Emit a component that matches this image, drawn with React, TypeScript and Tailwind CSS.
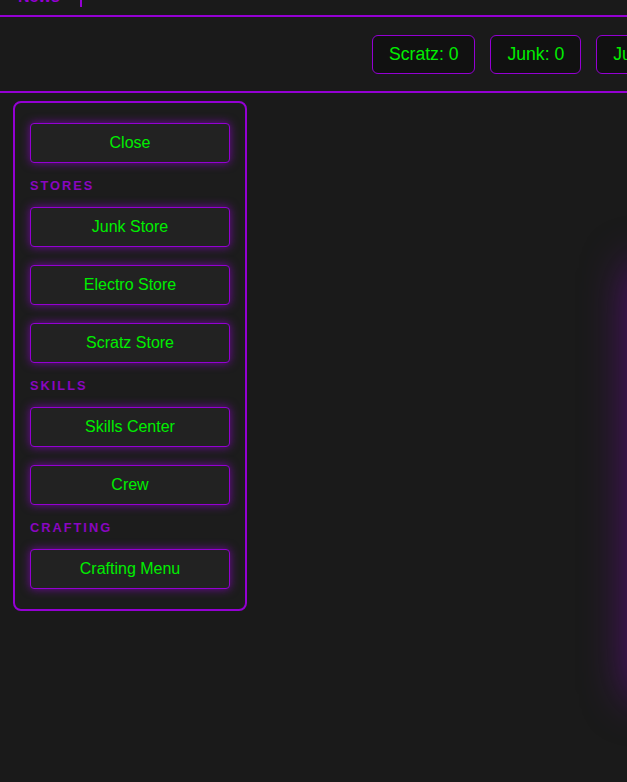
import React from "react";

const stats = [
  { label: "Scratz", value: 0 },
  { label: "Junk", value: 0 },
  { label: "Junk Rate", value: 0 },
];

const groups = [
  { title: "Stores", items: ["Junk Store", "Electro Store", "Scratz Store"] },
  { title: "Skills", items: ["Skills Center", "Crew"] },
  { title: "Crafting", items: ["Crafting Menu"] },
];

function MenuButton({ children }: { children: React.ReactNode }) {
  return (
    <button className="h-10 w-[200px] shrink-0 rounded-[4px] border border-[#9400d3] bg-[#222222] text-[16px] text-[#00ee00] shadow-[0_0_10px_rgba(148,0,211,0.7)]">
      {children}
    </button>
  );
}

export default function App() {
  return (
    <div
      className="h-[782px] w-full overflow-hidden bg-[#1a1a1a]"
      style={{ fontFamily: '"Liberation Sans", Arial, sans-serif' }}
    >
      {/* top nav, scrolled mostly out of view */}
      <nav className="-mt-[13px] flex items-start border-b-2 border-[#9400d3] pb-[8px]">
        <a className="border-r-2 border-[#9400d3] pl-[18px] pr-[20px] text-[16px] font-bold leading-[20px] text-[#9400d3]">
          News
        </a>
      </nav>

      {/* resource bar */}
      <div className="flex h-[76px] items-center gap-[15px] border-b-2 border-[#9400d3] pl-[372px]">
        {stats.map((s) => (
          <div
            key={s.label}
            className="flex h-[39px] shrink-0 items-center whitespace-nowrap rounded-[6px] border border-[#9400d3] bg-[#111111] px-4 text-[17.6px] text-[#00ee00]"
          >
            {s.label}: {s.value}
          </div>
        ))}
      </div>

      <div className="flex items-start pl-[13px] pt-2">
        {/* sidebar */}
        <aside className="flex w-[234px] shrink-0 flex-col rounded-lg border-2 border-[#9400d3] bg-[#1c1c1c] px-[15px] pb-5 pt-5">
          <MenuButton>Close</MenuButton>
          {groups.map((g) => (
            <div key={g.title} className="flex flex-col">
              <div className="mb-[13px] mt-[15px] text-[12.8px] font-bold uppercase leading-4 tracking-[2px] text-[#8a06c0]">
                {g.title}
              </div>
              <div className="flex flex-col gap-[18px]">
                {g.items.map((it) => (
                  <MenuButton key={it}>{it}</MenuButton>
                ))}
              </div>
            </div>
          ))}
        </aside>

        {/* main panel, off to the right */}
        <div className="ml-[382px] mt-[165px] h-[430px] w-[300px] shrink-0 rounded-lg bg-[#1a1a1a] shadow-[0_0_45px_rgba(148,0,211,0.5)]" />
      </div>
    </div>
  );
}
